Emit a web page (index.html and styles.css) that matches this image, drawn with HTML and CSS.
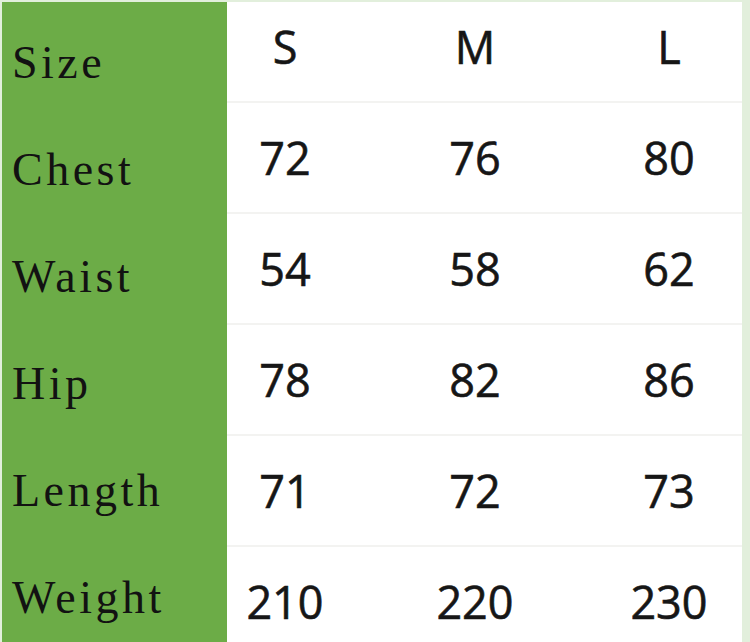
FILE: index.html
```html
<!DOCTYPE html>
<html>
<head>
<meta charset="utf-8">
<link rel="stylesheet" href="styles.css">
</head>
<body>
<div class="sheet">
  <div class="labels">
    <div class="label">Size</div>
    <div class="label">Chest</div>
    <div class="label">Waist</div>
    <div class="label">Hip</div>
    <div class="label">Length</div>
    <div class="label">Weight</div>
  </div>
  <div class="table">
    <div class="row head"><div class="cell">S</div><div class="cell">M</div><div class="cell">L</div></div>
    <div class="row"><div class="cell">72</div><div class="cell">76</div><div class="cell">80</div></div>
    <div class="row"><div class="cell">54</div><div class="cell">58</div><div class="cell">62</div></div>
    <div class="row"><div class="cell">78</div><div class="cell">82</div><div class="cell">86</div></div>
    <div class="row"><div class="cell">71</div><div class="cell">72</div><div class="cell">73</div></div>
    <div class="row"><div class="cell">210</div><div class="cell">220</div><div class="cell">230</div></div>
  </div>
</div>
</body>
</html>
```
FILE: styles.css
```css
html, body {
  margin: 0;
  padding: 0;
  background: #e2efdc;
  overflow: hidden;
}
.sheet {
  display: flex;
  margin: 2px 8px 0 2px;
  height: 640px;
  overflow: hidden;
}
.labels {
  width: 225px;
  flex: none;
  background: #6cac47;
  padding-top: 7px;
  box-sizing: border-box;
}
.label {
  height: 107px;
  display: flex;
  align-items: center;
  padding-left: 10px;
  font-family: "Liberation Serif", serif;
  font-size: 46px;
  letter-spacing: 3.5px;
  color: #121212;
}
.table {
  flex: 1;
  background: #ffffff;
  display: flex;
  flex-direction: column;
}
.row {
  height: 111px;
  flex: none;
  display: grid;
  grid-template-columns: 116px 264px 124px;
  align-items: center;
  border-top: 2px solid #f3f3f1;
  box-sizing: border-box;
}
.row.head {
  height: 99px;
  padding-bottom: 11px;
  border-top: none;
}
.cell {
  text-align: center;
  font-family: "Open Sans", sans-serif;
  font-size: 45px;
  line-height: 1;
  color: #161616;
  -webkit-text-stroke: 0.6px #161616;
}
```
